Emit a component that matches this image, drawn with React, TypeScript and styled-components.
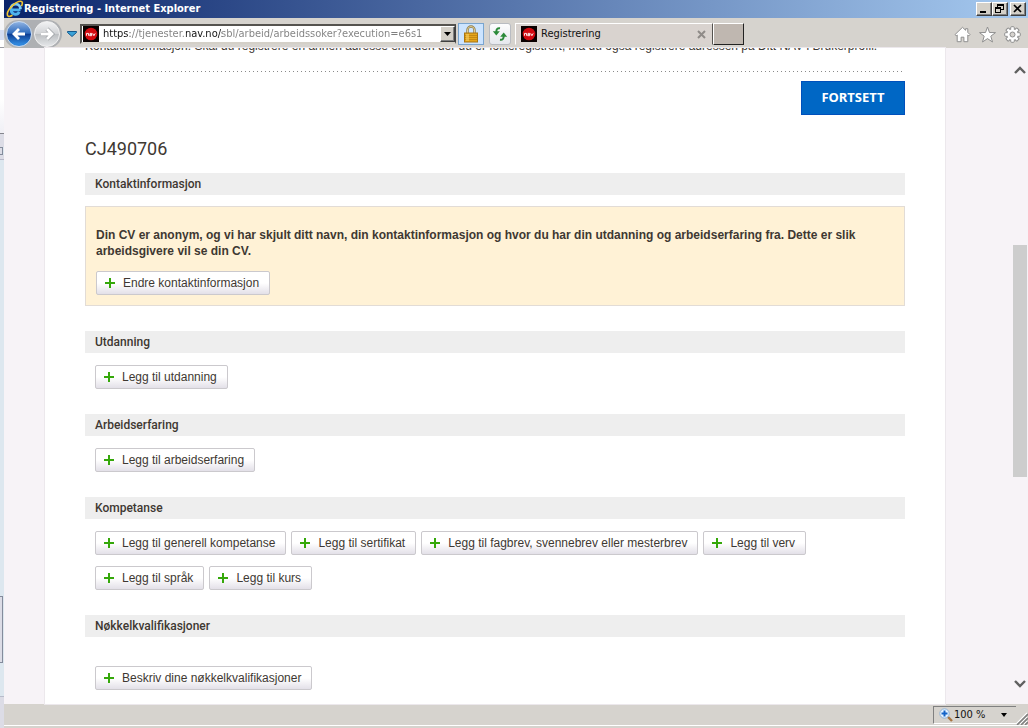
import React from "react";
import styled, { createGlobalStyle } from "styled-components";

const ui = '"DejaVu Sans Condensed", "DejaVu Sans", Tahoma, sans-serif';
const arial = '"Liberation Sans", Arial, sans-serif';
const brand = 'Roboto, "Noto Sans", sans-serif';
const chrome = "#d6d3ce";

const GlobalStyle = createGlobalStyle`
  * { box-sizing: border-box; }
  body { margin: 0; font-family: ${arial}; font-size: 12px; color: #3e3832; overflow: hidden; }
  button { font: inherit; color: inherit; padding: 0; margin: 0; border: 0; background: none; cursor: pointer; }
  svg { display: block; }
`;

const Desktop = styled.div`
  display: flex;
  height: 100vh;
  overflow: hidden;
`;

const BackWindow = styled.div`
  flex: 0 0 4px;
  display: flex;
  flex-direction: column;
  background: #dde7ef;
`;
const Sliver = styled.div<{ $h: number; $bg: string; $line?: string }>`
  flex: 0 0 ${(p) => p.$h}px;
  background: ${(p) => p.$bg};
  border-bottom: ${(p) => (p.$line ? `1px solid ${p.$line}` : "0")};
`;
const SliverBox = styled.div<{ $h: number }>`
  flex: 0 0 ${(p) => p.$h}px;
  margin-right: 1px;
  border: 1px solid #848b9c;
  border-left: 0;
  background: #dcdce6;
`;
const SliverGap = styled.div`
  flex: 1;
`;

const Browser = styled.div`
  flex: 1;
  min-width: 0;
  display: flex;
  flex-direction: column;
  background: ${chrome};
`;

const TitleBar = styled.header`
  flex: 0 0 18px;
  display: flex;
  align-items: center;
  padding: 0 2px;
  background: linear-gradient(to right, #0a246a, #a6caf0);
`;
const WindowTitle = styled.h1`
  flex: 1;
  margin: 0;
  font: bold 11px/18px ${ui};
  color: #fff;
  white-space: nowrap;
`;
const WindowButtons = styled.div`
  display: flex;
`;
const WindowButton = styled.button<{ $apart?: boolean }>`
  width: 16px;
  height: 14px;
  margin-left: ${(p) => (p.$apart ? 2 : 0)}px;
  background: #d4d0c8;
  border: 1px solid;
  border-color: #fff #404040 #404040 #fff;
  box-shadow: inset -1px -1px 0 #808080;
`;

const Toolbar = styled.nav`
  flex: 0 0 30px;
  display: flex;
  align-items: center;
  padding: 2px 7px 0 0;
`;
const NavPill = styled.div`
  flex: none;
  display: flex;
  align-items: center;
  gap: 2px;
  height: 28px;
  margin-right: 1px;
  padding: 0 2px;
  border-radius: 14px;
  background: #aeb0b3;
`;
const RoundButton = styled.button<{ $active?: boolean }>`
  display: grid;
  place-items: center;
  width: 26px;
  height: 26px;
  border-radius: 50%;
  border: 1px solid ${(p) => (p.$active ? "#c9dcf2" : "#f2f2f2")};
  background: ${(p) =>
    p.$active
      ? "linear-gradient(#8fb3e2, #2f6bbd 46%, #0e3f94 52%, #2f86dc 90%)"
      : "linear-gradient(#f1f2f3, #cfd1d4 50%, #bcbfc2 52%, #e4e6e8)"};
`;
const HistoryButton = styled.button`
  flex: none;
  display: grid;
  place-items: center;
  width: 17px;
  height: 22px;
`;
const AddressBox = styled.div`
  flex: 0 1 376px;
  display: flex;
  align-items: center;
  height: 20px;
  background: #fff;
  border: 2px solid;
  border-color: #55534f #d4d0c8 #d4d0c8 #55534f;
  border-right: 1px solid #404040;
  padding: 0 0 0 1px;
`;
const AddressInput = styled.input`
  flex: 1;
  min-width: 0;
  height: 16px;
  margin: 0 0 0 4px;
  padding: 0;
  border: 0;
  outline: 0;
  font: 11px/16px ${ui};
  background: linear-gradient(
    to right,
    #111 0 27px,
    #7f7f7f 27px 83px,
    #111 83px 119px,
    #7f7f7f 119px
  );
  -webkit-background-clip: text;
  background-clip: text;
  -webkit-text-fill-color: transparent;
`;
const DropButton = styled.button`
  display: grid;
  place-items: center;
  width: 15px;
  height: 16px;
  background: #d4d0c8;
  border: 1px solid;
  border-color: #fff #404040 #404040 #fff;
  box-shadow: inset -1px -1px 0 #808080;
`;
const ToolButton = styled.button<{ $lit?: boolean }>`
  flex: none;
  display: grid;
  place-items: center;
  width: ${(p) => (p.$lit ? 26 : 22)}px;
  height: 22px;
  margin-left: ${(p) => (p.$lit ? 2 : 5)}px;
  border: 1px solid ${(p) => (p.$lit ? "#7aa5cf" : "#b9bcc2")};
  border-radius: ${(p) => (p.$lit ? 0 : 3)}px;
  background: ${(p) => (p.$lit ? "#cce4ff" : "linear-gradient(#fdfdfe, #e6e8ee)")};
`;
const Tab = styled.div`
  flex: 0 1 198px;
  display: flex;
  align-items: center;
  gap: 4px;
  height: 22px;
  margin-left: 4px;
  padding: 0 6px 0 5px;
  border: 1px solid;
  border-color: #fff #55534f ${chrome} #fff;
  background: #d9d3cf;
  font: 11px/18px ${ui};
  color: #111;
`;
const TabName = styled.span`
  flex: 1;
`;
const NewTab = styled.button`
  flex: none;
  width: 31px;
  height: 22px;
  border: 1px solid;
  border-color: #fff #222 #222 #fff;
  background: #bfb7b0;
`;
const Tools = styled.div`
  margin-left: auto;
  display: flex;
  gap: 8px;
`;

const Viewport = styled.div`
  flex: 1;
  min-height: 0;
  display: flex;
  background: #f7f3f7;
`;
const Page = styled.main`
  flex: 1;
  min-width: 0;
  margin: 0 67px 0 41px;
  padding: 0 40px;
  overflow: hidden;
  background: #fff;
  outline: 1px solid #ece8ec;
`;
const CutLine = styled.div`
  display: flex;
  align-items: flex-end;
  height: 6px;
  overflow: hidden;
  white-space: nowrap;
  line-height: 16px;
`;
const Dots = styled.hr`
  height: 1px;
  margin: 17px 1px 9px 0;
  border: 0;
  background: repeating-linear-gradient(to right, #8a8a8a 0 1px, transparent 1px 4px);
`;
const Actions = styled.div`
  display: flex;
  justify-content: flex-end;
`;
const PrimaryButton = styled.button`
  width: 104px;
  height: 34px;
  padding-bottom: 2px;
  border: 1px solid #0050bc;
  background: #0067c5;
  color: #fff;
  font: bold 13px/16px "Noto Sans", "Open Sans", sans-serif;
`;
const CvTitle = styled.h2`
  margin: 22px 0 12px;
  font: 18px/24px ${brand};
`;
const Section = styled.section`
  margin-bottom: 25px;
`;
const SectionTitle = styled.h3`
  margin: 0;
  padding: 0 10px;
  background: #eee;
  font: 500 12px/22px ${brand};
`;
const ButtonRow = styled.div<{ $top?: number }>`
  display: flex;
  flex-wrap: wrap;
  gap: 11px 5px;
  padding: ${(p) => p.$top ?? 12}px 10px 0;
`;
const AddButtonBox = styled.button`
  display: flex;
  align-items: center;
  gap: 7px;
  height: 24px;
  padding: 0 10px 0 8px;
  border: 1px solid #cbc9cd;
  border-radius: 2px;
  background: linear-gradient(#fff 50%, #e3e0e8);
  font: 12px/22px ${arial};
  white-space: nowrap;
`;
const Notice = styled.div`
  margin-top: 11px;
  padding: 20px 10px 10px;
  border: 1px solid #e2dcd6;
  background: #fff2d6;
`;
const NoticeText = styled.p`
  margin: 0 0 12px;
  font: bold 12px/16px ${arial};
`;

const ScrollColumn = styled.div`
  flex: 0 0 16px;
  display: grid;
  grid-template-rows: 44px 153fr 232fr 185fr 42px;
`;
const ScrollButton = styled.button`
  display: grid;
  place-items: center;
`;
const Thumb = styled.div`
  grid-row: 3;
  margin: 0 1px;
  background: #cdcdcd;
`;
const LastRow = styled.div`
  grid-row: 5;
  display: grid;
`;

const StatusBar = styled.footer`
  flex: 0 0 24px;
  padding-top: 2px;
`;
const StatusFields = styled.div`
  display: flex;
  align-items: flex-end;
  justify-content: flex-end;
  height: 19px;
`;
const ZoomButton = styled.button`
  display: flex;
  align-items: center;
  align-self: flex-start;
  width: 83px;
  height: 18px;
  padding: 0 9px 0 5px;
  border-top: 1px solid #808080;
  border-left: 1px solid #808080;
  border-bottom: 1px solid #fff;
  font: 11px/16px ${ui};
  color: #111;
`;
const ZoomValue = styled.span`
  flex: 1;
  padding-left: 1px;
  text-align: left;
  white-space: nowrap;
`;
const StatusEdge = styled.div`
  height: 1px;
  background: #fff;
`;

const IeIcon = () => (
  <svg width="18" height="18" viewBox="0 0 18 18" aria-hidden="true">
    <path d="M14.5 9.8H5.200a4.200 4.200 0 0 0 8 2" fill="none" stroke="#4db4ee" strokeWidth="2.800" />
    <path d="M4.800 8.600a4.800 4.800 0 0 1 9.600.6" fill="none" stroke="#7cccf5" strokeWidth="2.800" />
    <path d="M15.500 6.200C17 3 16.500 1.200 14.500 1.300 10 1.500 2 8.500 1.300 13.800c-.3 3 2 3.400 5.200 1.400" fill="none" stroke="#f2c531" strokeWidth="1.600" />
  </svg>
);
const NavLogo = () => (
  <svg width="16" height="16" viewBox="0 0 16 16" role="img" aria-label="nav">
    <rect width="16" height="16" fill="#0a0000" />
    <circle cx="8" cy="8" r="6.300" fill="#d20a10" />
    <path d="M3.500 9.700V7.400h2v2.300M6.700 7.400h2v2.300h-2V8.600h2M9.700 7.400l1.200 2.300 1.300-2.300" fill="none" stroke="#fff" strokeWidth=".9" />
  </svg>
);
const Arrow = ({ left }: { left?: boolean }) => (
  <svg width="16" height="16" viewBox="0 0 16 16" aria-hidden="true">
    <path
      d={left ? "M14 8H3.500M8 3 3 8l5 5" : "M2 8h10.500M8 3l5 5-5 5"}
      fill="none"
      stroke={left ? "none" : "#9a9da1"}
      strokeWidth="4.200"
    />
    <path
      d={left ? "M14 8H3.500M8 3 3 8l5 5" : "M2 8h10.500M8 3l5 5-5 5"}
      fill="none"
      stroke="#fff"
      strokeWidth="2.800"
    />
  </svg>
);
const Triangle = ({ w = 7, color = "#000" }: { w?: number; color?: string }) => (
  <svg width={w} height="4" viewBox="0 0 8 4" preserveAspectRatio="none" aria-hidden="true">
    <path d="M0 0h8L4 4z" fill={color} />
  </svg>
);
const LockIcon = () => (
  <svg width="16" height="18" viewBox="0 0 16 18" aria-hidden="true">
    <path d="M4.500 9V5a3.500 3.500 0 0 1 7 0v4" fill="none" stroke="#8d7b4b" strokeWidth="2.400" />
    <path d="M4.500 9V5a3.500 3.500 0 0 1 7 0v4" fill="none" stroke="#e1cf95" strokeWidth="1" />
    <rect x="1.500" y="8" width="13" height="9" fill="#e5a61c" stroke="#a87513" />
    <path d="M2 10.500h12M2 12.500h12M2 14.500h12" stroke="#bd8212" strokeWidth=".8" />
    <path d="M3 9h3v7H3z" fill="#f7d066" opacity=".6" />
  </svg>
);
const RefreshIcon = () => (
  <svg width="16" height="14" viewBox="0 0 16 14" aria-hidden="true">
    <path d="M8 1.200C5.500.8 4.300 2 4.300 5" fill="none" stroke="#2b8a3a" strokeWidth="2" />
    <path d="M.8 4.300h7L4.300 8.500z" fill="#2b8a3a" />
    <path d="M8 12.800c2.500.4 3.700-.8 3.700-3.800" fill="none" stroke="#2b8a3a" strokeWidth="2" />
    <path d="M8.200 9.700h7l-3.500-4.200z" fill="#2b8a3a" />
  </svg>
);
const HomeIcon = () => (
  <svg width="17" height="17" viewBox="0 0 17 17" aria-hidden="true">
    <path d="M8.500 1.300 1 8.600l1.200 1.300 1-.9v6.700h3.900v-4.500h2.800v4.500h3.900V9l1 .9L16 8.600l-2.200-2.200V2.700h-2.200v1.600z" fill="#fff" stroke="#8f8f8f" />
  </svg>
);
const StarIcon = () => (
  <svg width="17" height="17" viewBox="0 0 17 17" aria-hidden="true">
    <path d="m8.500 1 2 5.500 6 .1-4.700 3.600 1.700 5.800-5-3.400L3.500 16l1.700-5.800L.5 6.600l6-.1z" fill="#fff" stroke="#8f8f8f" />
  </svg>
);
const GearIcon = () => (
  <svg width="17" height="17" viewBox="0 0 17 17" aria-hidden="true">
    {[0, 45, 90, 135].map((a) => (
      <rect key={a} x="6.700" y=".7" width="3.600" height="15.600" rx="1" fill="#fff" stroke="#8f8f8f" transform={`rotate(${a} 8.500 8.500)`} />
    ))}
    <circle cx="8.500" cy="8.500" r="5.200" fill="#fff" />
    <circle cx="8.500" cy="8.500" r="2.500" fill={chrome} stroke="#8f8f8f" />
  </svg>
);
const Plus = () => (
  <svg width="11" height="12" viewBox="0 0 11 12" aria-hidden="true">
    <path d="M0 5h10v2H0zM4 1h2v10H4z" fill="#35a80a" />
  </svg>
);
const Chevron = ({ up }: { up?: boolean }) => (
  <svg width="12" height="9" viewBox="0 0 12 9" aria-hidden="true">
    <path d={up ? "M1 7l5-5 5 5" : "M1 2l5 5 5-5"} fill="none" stroke="#606060" strokeWidth="2.400" />
  </svg>
);
const MagnifierIcon = () => (
  <svg width="14" height="14" viewBox="0 0 14 14" aria-hidden="true">
    <path d="m9 9 4 4" stroke="#a9743d" strokeWidth="2.400" />
    <circle cx="5.500" cy="5.500" r="4.700" fill="#e4f2ff" stroke="#8fb2d6" />
    <path d="M5.500 2.500v6M2.500 5.500h6" stroke="#1464c8" strokeWidth="2" />
  </svg>
);
const GripIcon = () => (
  <svg width="12" height="13" viewBox="0 0 12 13" aria-hidden="true">
    <path d="M1 13 12 2M5 13l7-7M9 13l3-3" stroke="#fff" strokeWidth="1.200" transform="translate(-1 -1)" />
    <path d="M1 13 12 2M5 13l7-7M9 13l3-3" stroke="#808080" strokeWidth="1.600" />
  </svg>
);

const AddButton = ({ children }: { children: React.ReactNode }) => (
  <AddButtonBox type="button">
    <Plus />
    {children}
  </AddButtonBox>
);

export default function App() {
  return (
    <Desktop>
      <GlobalStyle />
      <BackWindow>
        <Sliver $h={12} $bg="#fff" />
        <Sliver $h={18} $bg="#f6f6f8" />
        <Sliver $h={10} $bg="#d5def2" />
        <Sliver $h={8} $bg="#fff" $line="#9a9aa2" />
        <Sliver $h={86} $bg="linear-gradient(#fff 60%, #f0eff5)" $line="#85858d" />
        <Sliver $h={13} $bg="#dcdce6" />
        <SliverBox $h={8} />
        <Sliver $h={5} $bg="#dcdce6" $line="#b8b8c8" />
        <SliverGap />
        <SliverBox $h={67} />
        <Sliver $h={34} $bg="#dde7ef" $line="#b8bccb" />
        <Sliver $h={31} $bg="#dcdce6" />
      </BackWindow>
      <Browser>
        <TitleBar>
          <IeIcon />
          <WindowTitle>Registrering - Internet Explorer</WindowTitle>
          <WindowButtons>
            <WindowButton type="button" aria-label="Minimer">
              <svg width="14" height="12" viewBox="0 0 14 12"><path d="M3 8h6v2H3z" /></svg>
            </WindowButton>
            <WindowButton type="button" aria-label="Gjenopprett">
              <svg width="14" height="12" viewBox="0 0 14 12" shapeRendering="crispEdges">
                <path d="M4 1h7v2H4zM4 3h1v2H4zM10 3h1v4h-1zM8 6h2v1H8zM2 4h6v2H2zM2 6h1v4H2zM7 6h1v4H7zM3 9h4v1H3z" />
              </svg>
            </WindowButton>
            <WindowButton type="button" aria-label="Lukk" $apart>
              <svg width="14" height="12" viewBox="0 0 14 12"><path d="m3 2 7 7M10 2 3 9" stroke="#000" strokeWidth="1.700" /></svg>
            </WindowButton>
          </WindowButtons>
        </TitleBar>
        <Toolbar>
          <NavPill>
            <RoundButton type="button" aria-label="Tilbake" $active><Arrow left /></RoundButton>
            <RoundButton type="button" aria-label="Frem"><Arrow /></RoundButton>
          </NavPill>
          <HistoryButton type="button" aria-label="Historikk">
            <svg width="10" height="6" viewBox="0 0 10 6"><path d="M.5.500h9v1L5 5.500.5 1.500z" fill="#3ba3d8" stroke="#14588c" /></svg>
          </HistoryButton>
          <AddressBox>
            <NavLogo />
            <AddressInput aria-label="Adresse" defaultValue="https://tjenester.nav.no/sbl/arbeid/arbeidssoker?execution=e6s1" />
            <DropButton type="button" aria-label="Vis adresser"><Triangle /></DropButton>
          </AddressBox>
          <ToolButton type="button" aria-label="Sikkerhet" $lit><LockIcon /></ToolButton>
          <ToolButton type="button" aria-label="Oppdater"><RefreshIcon /></ToolButton>
          <Tab>
            <NavLogo />
            <TabName>Registrering</TabName>
            <button type="button" aria-label="Lukk fane">
              <svg width="9" height="9" viewBox="0 0 9 9"><path d="m1 1 7 7M8 1 1 8" stroke="#8f8b88" strokeWidth="2" /></svg>
            </button>
          </Tab>
          <NewTab type="button" aria-label="Ny fane" />
          <Tools>
            <button type="button" aria-label="Hjem"><HomeIcon /></button>
            <button type="button" aria-label="Favoritter"><StarIcon /></button>
            <button type="button" aria-label="Verktøy"><GearIcon /></button>
          </Tools>
        </Toolbar>
        <Viewport>
          <Page>
            <CutLine>
              Kontaktinformasjon. Skal du registrere en annen adresse enn den der du er folkeregistrert, må du også registrere adressen på Ditt NAV i Brukerprofil.
            </CutLine>
            <Dots />
            <Actions>
              <PrimaryButton type="button">FORTSETT</PrimaryButton>
            </Actions>
            <CvTitle>CJ490706</CvTitle>
            <Section>
              <SectionTitle>Kontaktinformasjon</SectionTitle>
              <Notice>
                <NoticeText>
                  Din CV er anonym, og vi har skjult ditt navn, din kontaktinformasjon og hvor du har din utdanning og arbeidserfaring fra. Dette er slik arbeidsgivere vil se din CV.
                </NoticeText>
                <AddButton>Endre kontaktinformasjon</AddButton>
              </Notice>
            </Section>
            <Section>
              <SectionTitle>Utdanning</SectionTitle>
              <ButtonRow><AddButton>Legg til utdanning</AddButton></ButtonRow>
            </Section>
            <Section>
              <SectionTitle>Arbeidserfaring</SectionTitle>
              <ButtonRow><AddButton>Legg til arbeidserfaring</AddButton></ButtonRow>
            </Section>
            <Section>
              <SectionTitle>Kompetanse</SectionTitle>
              <ButtonRow>
                <AddButton>Legg til generell kompetanse</AddButton>
                <AddButton>Legg til sertifikat</AddButton>
                <AddButton>Legg til fagbrev, svennebrev eller mesterbrev</AddButton>
                <AddButton>Legg til verv</AddButton>
                <AddButton>Legg til språk</AddButton>
                <AddButton>Legg til kurs</AddButton>
              </ButtonRow>
            </Section>
            <Section>
              <SectionTitle>Nøkkelkvalifikasjoner</SectionTitle>
              <ButtonRow $top={29}><AddButton>Beskriv dine nøkkelkvalifikasjoner</AddButton></ButtonRow>
            </Section>
          </Page>
          <ScrollColumn>
            <ScrollButton type="button" aria-label="Rull opp"><Chevron up /></ScrollButton>
            <Thumb />
            <LastRow>
              <ScrollButton type="button" aria-label="Rull ned"><Chevron /></ScrollButton>
            </LastRow>
          </ScrollColumn>
        </Viewport>
        <StatusBar>
          <StatusFields>
            <ZoomButton type="button" aria-label="Zoomnivå">
              <MagnifierIcon />
              <ZoomValue>100 %</ZoomValue>
              <Triangle w={6} />
            </ZoomButton>
            <GripIcon />
          </StatusFields>
          <StatusEdge />
        </StatusBar>
      </Browser>
    </Desktop>
  );
}
